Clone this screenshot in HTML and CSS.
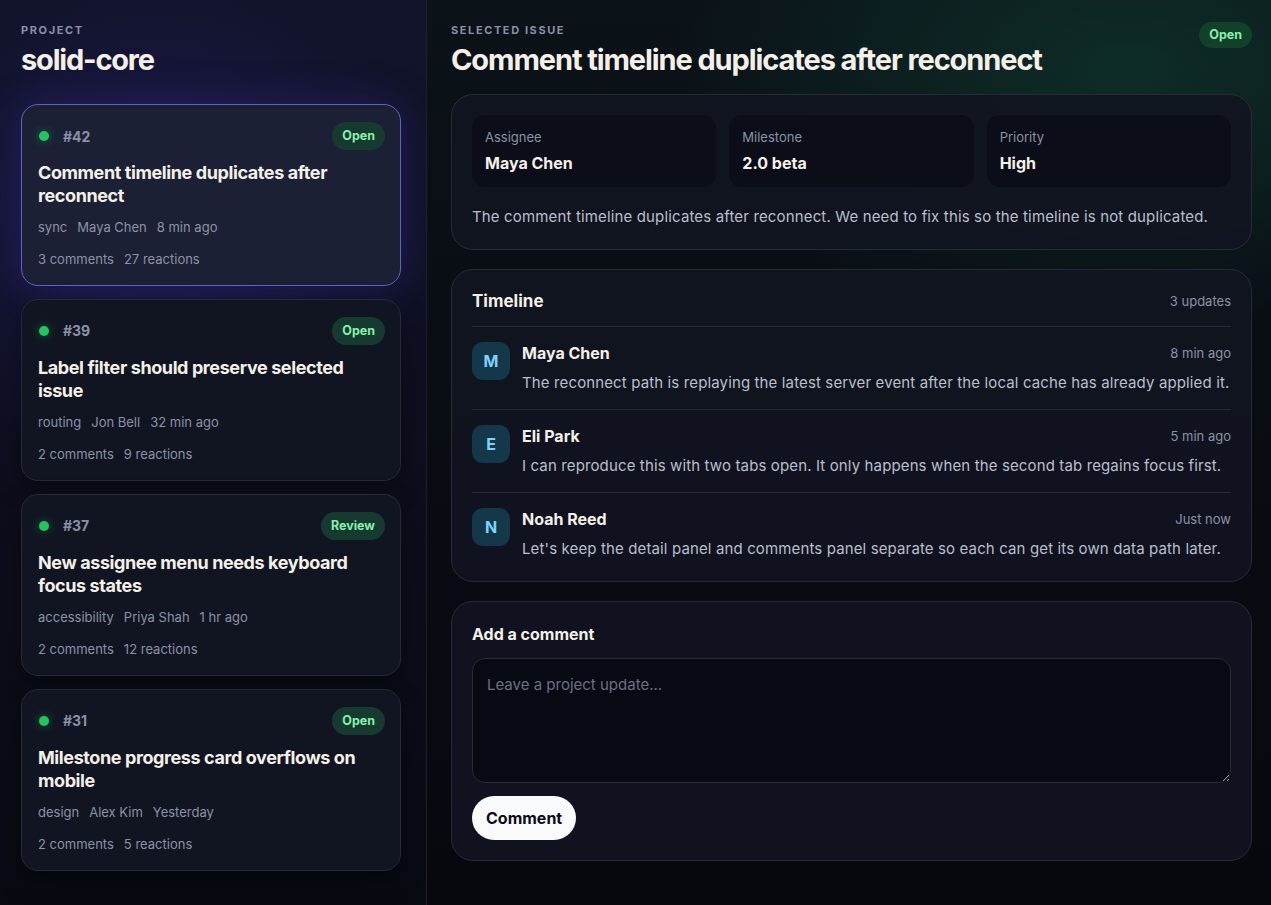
FILE: index.html
```html
<!DOCTYPE html>
<html lang="en">

<head>
   <meta charset="UTF-8">
   <meta name="viewport" content="width=device-width, initial-scale=1.0">
   <title>solid-core issues</title>

   <link rel="stylesheet" href="styles.css">
</head>

<body>
   <div class="app">

      <aside class="sidebar">
         <div class="eyebrow">Project</div>
         <div class="project__title">solid-core</div>

         <div class="issue__list">

            <div class="issue issue--selected">
               <div class="issue__top">
                  <span class="issue__dot"></span>
                  <span class="issue__number">#42</span>
                  <span class="badge">Open</span>
               </div>
               <div class="issue__title">Comment timeline duplicates after reconnect</div>
               <div class="issue__meta">
                  <span>sync</span><span>Maya Chen</span><span>8 min ago</span>
               </div>
               <div class="issue__counts">
                  <span>3 comments</span><span>27 reactions</span>
               </div>
            </div>

            <div class="issue">
               <div class="issue__top">
                  <span class="issue__dot"></span>
                  <span class="issue__number">#39</span>
                  <span class="badge">Open</span>
               </div>
               <div class="issue__title">Label filter should preserve selected issue</div>
               <div class="issue__meta">
                  <span>routing</span><span>Jon Bell</span><span>32 min ago</span>
               </div>
               <div class="issue__counts">
                  <span>2 comments</span><span>9 reactions</span>
               </div>
            </div>

            <div class="issue">
               <div class="issue__top">
                  <span class="issue__dot"></span>
                  <span class="issue__number">#37</span>
                  <span class="badge">Review</span>
               </div>
               <div class="issue__title">New assignee menu needs keyboard focus states</div>
               <div class="issue__meta">
                  <span>accessibility</span><span>Priya Shah</span><span>1 hr ago</span>
               </div>
               <div class="issue__counts">
                  <span>2 comments</span><span>12 reactions</span>
               </div>
            </div>

            <div class="issue">
               <div class="issue__top">
                  <span class="issue__dot"></span>
                  <span class="issue__number">#31</span>
                  <span class="badge">Open</span>
               </div>
               <div class="issue__title">Milestone progress card overflows on mobile</div>
               <div class="issue__meta">
                  <span>design</span><span>Alex Kim</span><span>Yesterday</span>
               </div>
               <div class="issue__counts">
                  <span>2 comments</span><span>5 reactions</span>
               </div>
            </div>

         </div>
      </aside>

      <main class="main">
         <div class="main__header">
            <div>
               <div class="eyebrow">Selected issue</div>
               <h1 class="main__title">Comment timeline duplicates after reconnect</h1>
            </div>
            <span class="badge badge--header">Open</span>
         </div>

         <section class="panel">
            <div class="facts">
               <div class="fact">
                  <div class="fact__label">Assignee</div>
                  <div class="fact__value">Maya Chen</div>
               </div>
               <div class="fact">
                  <div class="fact__label">Milestone</div>
                  <div class="fact__value">2.0 beta</div>
               </div>
               <div class="fact">
                  <div class="fact__label">Priority</div>
                  <div class="fact__value">High</div>
               </div>
            </div>
            <p class="description">
               The comment timeline duplicates after reconnect. We need to fix this so the timeline is not duplicated.
            </p>
         </section>

         <section class="panel">
            <div class="timeline__header">
               <div class="panel__title">Timeline</div>
               <div class="muted">3 updates</div>
            </div>

            <div class="entry">
               <div class="avatar">M</div>
               <div class="entry__body">
                  <div class="entry__head">
                     <span class="entry__name">Maya Chen</span>
                     <span class="muted">8 min ago</span>
                  </div>
                  <div class="entry__text">The reconnect path is replaying the latest server event after the local cache has already applied it.</div>
               </div>
            </div>

            <div class="entry">
               <div class="avatar">E</div>
               <div class="entry__body">
                  <div class="entry__head">
                     <span class="entry__name">Eli Park</span>
                     <span class="muted">5 min ago</span>
                  </div>
                  <div class="entry__text">I can reproduce this with two tabs open. It only happens when the second tab regains focus first.</div>
               </div>
            </div>

            <div class="entry">
               <div class="avatar">N</div>
               <div class="entry__body">
                  <div class="entry__head">
                     <span class="entry__name">Noah Reed</span>
                     <span class="muted">Just now</span>
                  </div>
                  <div class="entry__text">Let's keep the detail panel and comments panel separate so each can get its own data path later.</div>
               </div>
            </div>
         </section>

         <section class="panel">
            <div class="comment__title">Add a comment</div>
            <textarea class="comment__input" placeholder="Leave a project update..."></textarea>
            <button class="comment__button">Comment</button>
         </section>
      </main>

   </div>
</body>

</html>
```

FILE: styles.css
```css
* {
   font-family: Inter, 'Noto Sans', sans-serif;
   -webkit-font-smoothing: antialiased;
   box-sizing: border-box;
   padding: 0;
   margin: 0;
}

body {
   background-color: #07090f;
   color: #f4f0e8;
   height: 100vh;
   overflow: hidden;
}

.app {
   display: flex;
   height: 100vh;
}

/* sidebar */

.sidebar {
   width: 427px;
   flex-shrink: 0;
   padding: 23px 25px 0 21px;
   border-right: 1px solid #1e212c;
   background:
      radial-gradient(ellipse 420px 360px at 160px 230px, rgba(40, 34, 120, 0.45), transparent 70%),
      linear-gradient(180deg, #12142c 0%, #0c0e1c 55%, #080a12 100%);
}

.eyebrow {
   font-size: 11px;
   line-height: 14px;
   font-weight: 700;
   letter-spacing: 1.6px;
   text-transform: uppercase;
   color: #8a90a8;
}

.project__title {
   margin-top: 6px;
   font-size: 29px;
   line-height: 34px;
   font-weight: 700;
   letter-spacing: -1.2px;
}

.issue__list {
   margin-top: 27px;
   display: flex;
   flex-direction: column;
   gap: 12.6px;
}

.issue {
   padding: 17px 15px 17.4px 16px;
   border: 1px solid #262a37;
   border-radius: 17px;
   background-color: #111522;
   box-shadow: 0 10px 24px rgba(0, 0, 0, 0.35);
}

.issue--selected {
   background-color: #1b2035;
   border-color: #5e63c8;
   box-shadow: 0 0 40px rgba(76, 64, 200, 0.25);
}

.issue__top {
   display: flex;
   align-items: center;
   height: 28px;
}

.issue__dot {
   width: 10px;
   height: 10px;
   margin-left: 1px;
   border-radius: 50%;
   background-color: #22c55e;
   box-shadow: 0 0 10px rgba(34, 197, 94, 0.45);
}

.issue__number {
   margin-left: 14px;
   font-size: 14px;
   font-weight: 700;
   color: #8a91a6;
}

.badge {
   margin-left: auto;
   padding: 0 10px;
   height: 28px;
   line-height: 28px;
   border-radius: 14px;
   font-size: 12.5px;
   font-weight: 700;
   color: #86efac;
   background-color: #163a2f;
}

.badge--header {
   height: 26px;
   line-height: 26px;
   margin-top: -1px;
   background-color: #11402b;
}

.issue__title {
   margin-top: 11px;
   font-size: 18px;
   line-height: 23px;
   font-weight: 700;
   letter-spacing: -0.4px;
}

.issue__meta,
.issue__counts {
   display: flex;
   gap: 10px;
   font-size: 13px;
   line-height: 18px;
   color: #8b92a6;
}

.issue__meta {
   margin-top: 11px;
}

.issue__counts {
   margin-top: 14px;
}

/* main */

.main {
   flex: 1;
   padding: 23px 19px 0 24px;
   display: flex;
   flex-direction: column;
   gap: 19px;
   background:
      radial-gradient(ellipse 620px 340px at 700px 70px, rgba(16, 72, 56, 0.5), transparent 75%),
      linear-gradient(180deg, #0b1218 0%, #080b12 60%, #06080e 100%);
}

.main__header {
   display: flex;
   justify-content: space-between;
   align-items: flex-start;
   margin-bottom: -2px;
}

.main__title {
   margin-top: 6px;
   font-size: 29px;
   line-height: 34px;
   font-weight: 700;
   letter-spacing: -1.1px;
}

.panel {
   padding: 20px;
   border: 1px solid #272b37;
   border-radius: 22px;
   background-color: rgba(17, 21, 33, 0.92);
}

.facts {
   display: grid;
   grid-template-columns: 1fr 1fr 1fr;
   gap: 13px;
}

.fact {
   height: 72px;
   padding: 14px 13px;
   border-radius: 13px;
   background-color: #0b0e18;
}

.fact__label {
   font-size: 13px;
   line-height: 16px;
   color: #8b92a6;
}

.fact__value {
   margin-top: 8px;
   font-size: 16px;
   line-height: 20px;
   font-weight: 700;
}

.description {
   margin-top: 18px;
   font-size: 15px;
   line-height: 24px;
   letter-spacing: 0.15px;
   color: #b9bfcc;
}

.timeline__header {
   display: flex;
   justify-content: space-between;
   align-items: center;
   padding-bottom: 14px;
   border-bottom: 1px solid #262a36;
}

.panel__title {
   font-size: 17px;
   line-height: 22px;
   font-weight: 700;
}

.muted {
   font-size: 13px;
   color: #8b92a6;
}

.entry {
   display: flex;
   gap: 12px;
   padding: 15px 0 14px;
   border-bottom: 1px solid #262a36;
}

.entry:last-child {
   border-bottom: none;
   padding-bottom: 0;
}

.avatar {
   width: 38px;
   height: 38px;
   flex-shrink: 0;
   border-radius: 11px;
   background-color: #14384a;
   color: #7dd3fc;
   font-size: 16px;
   font-weight: 700;
   display: flex;
   align-items: center;
   justify-content: center;
}

.entry__body {
   flex: 1;
}

.entry__head {
   display: flex;
   justify-content: space-between;
   align-items: center;
   height: 22px;
}

.entry__name {
   font-size: 16px;
   font-weight: 700;
}

.entry__text {
   margin-top: 7px;
   font-size: 15px;
   line-height: 24px;
   letter-spacing: 0.13px;
   color: #b9bfcc;
}

.comment__title {
   font-size: 16px;
   line-height: 24px;
   font-weight: 700;
}

.comment__input {
   display: block;
   width: 100%;
   height: 125px;
   margin-top: 12px;
   padding: 15px 14px;
   border: 1px solid #272b36;
   border-radius: 13px;
   background-color: #070a12;
   color: #f4f0e8;
   font-size: 15px;
   line-height: 22px;
   resize: vertical;
}

.comment__input::placeholder {
   color: #6b7080;
}

.comment__button {
   margin-top: 13px;
   height: 44px;
   padding: 0 14px;
   border: none;
   border-radius: 22px;
   background-color: #f8fafc;
   color: #0b0d14;
   font-size: 16px;
   font-weight: 700;
   align-self: flex-start;
}
```
